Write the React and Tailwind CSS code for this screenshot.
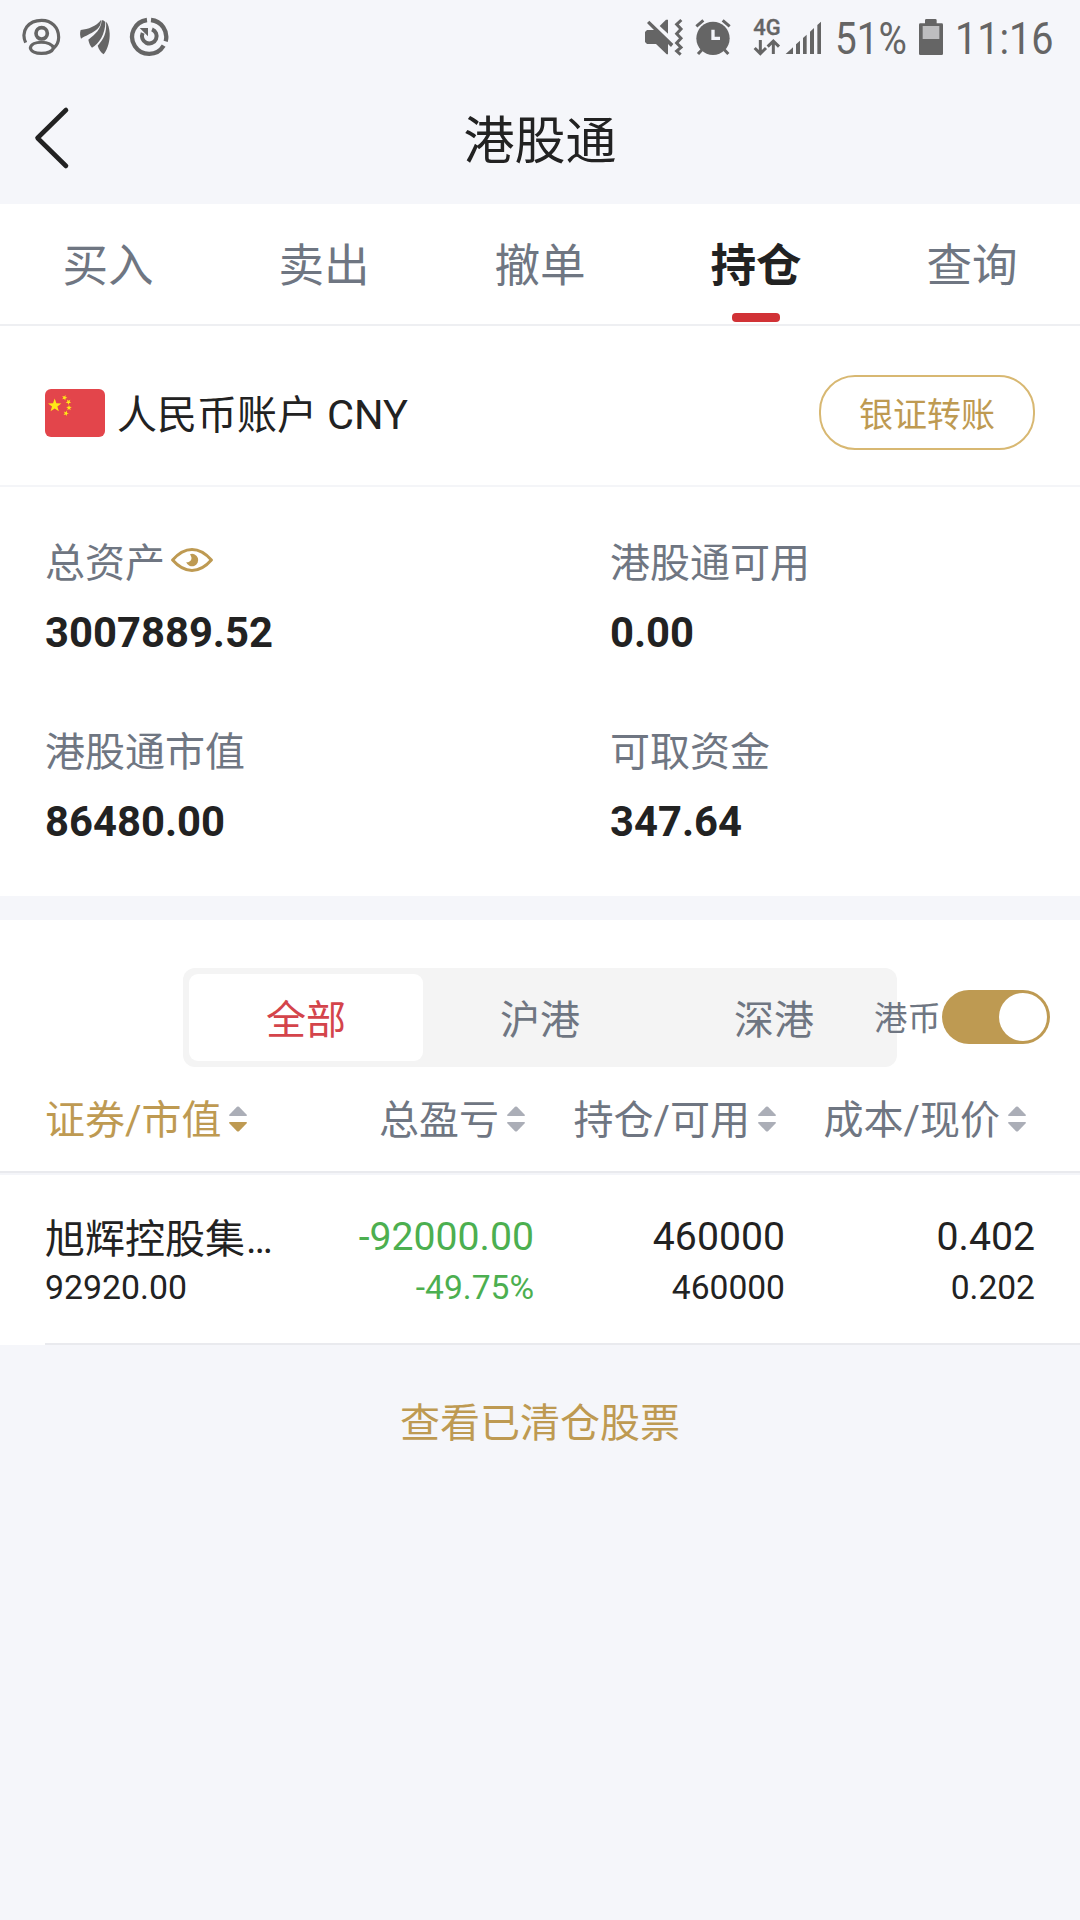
import React from "react";

const tabs = ["买入", "卖出", "撤单", "持仓", "查询"];

const assets = [
  { label: "总资产", value: "3007889.52", eye: true },
  { label: "港股通可用", value: "0.00" },
  { label: "港股通市值", value: "86480.00" },
  { label: "可取资金", value: "347.64" },
];

const columns = [
  { label: "证券/市值", active: true },
  { label: "总盈亏" },
  { label: "持仓/可用" },
  { label: "成本/现价" },
];

function StatusBar() {
  return (
    <div className="flex h-[74px] items-start text-[#656565]">
      <svg className="ml-5 h-[74px] w-11 shrink-0" viewBox="59 0 132 222" fill="none" stroke="currentColor" strokeWidth="9.5">
        <path d="M76 128 C60 92 84 61 124 61 C154 61 175 83 175 112 C175 126 169 137 160 144" />
        <circle cx="124" cy="100" r="17" strokeWidth="11" />
        <path d="M90 144 C94 121 150 121 160 144 C150 166 94 165 90 144 Z" />
      </svg>
      <svg className="ml-[14px] h-[74px] w-[34px] shrink-0" viewBox="234 0 102 222" fill="currentColor">
        <path d="M242 90 C265 87 288 80 303 60 C304 92 272 98 243 116 C240 107 239 99 242 90 Z" />
        <path d="M305 61 C303 88 287 102 265 119 C267 130 271 138 276 143 C297 132 316 102 316 66 C312 62 309 60 305 61 Z" />
        <path d="M318 65 C321 98 311 117 293 137 C296 149 304 158 311 163 C325 145 330 120 329 100 C328 85 325 72 318 65 Z" />
      </svg>
      <svg className="ml-4 h-[74px] w-[42px] shrink-0" viewBox="384 0 126 222" fill="none" stroke="currentColor" strokeWidth="13">
        <path d="M441 60 A51 51 0 1 0 491 137" />
        <path d="M453 60 A51 51 0 0 1 497 124" />
        <path d="M456 88 A22 22 0 1 1 428 99" strokeWidth="12" />
        <path d="M419 84 H444 V109 Z" fill="currentColor" stroke="none" />
      </svg>

      <svg className="ml-auto h-[80px] w-10 shrink-0" viewBox="72 0 120 240" fill="currentColor">
        <path d="M81 69 L88 62 L160 132 L153 141 L144 132 V163 H140 L108 132 H81 L75 126 V96 L81 90 H102 Z" />
        <path d="M119 78 L138 59 H144 V101 Z" />
        <path d="M184 60 L170 73 L183 87 L170 101 L183 115 L170 129 L183 142 L170 153 L182 164" fill="none" stroke="currentColor" strokeWidth="9" />
      </svg>
      <svg className="ml-2.5 h-[80px] w-[38px] shrink-0" viewBox="222 0 114 240" fill="none" stroke="currentColor" strokeWidth="9">
        <circle cx="279" cy="115" r="50" fill="currentColor" stroke="none" />
        <path d="M229 79 L250 61 M308 61 L329 79 M234 162 L246 149 M325 162 L313 149" />
        <path d="M279 89 V115 H300" stroke="#f5f6fa" strokeWidth="10" />
      </svg>
      <svg className="ml-5 h-[80px] w-[72px] shrink-0" viewBox="396 0 216 240">
        <text x="400" y="105" fontSize="65" fontWeight="500" fontFamily="Roboto, sans-serif" textLength="82" lengthAdjust="spacingAndGlyphs" fill="currentColor" stroke="currentColor" strokeWidth="1">4G</text>
        <path d="M421 120 V160 M404 144 L421 161 L438 144 M460 162 V124 M443 140 L460 123 L477 140" fill="none" stroke="currentColor" strokeWidth="9" />
        <path d="M497 162 L519 142 V162 Z M528 162 V133 L540 122 V162 Z M549 162 V114 L560 104 V162 Z M570 162 V95 L582 84 V162 Z M592 162 V75 L603 65 V162 Z" fill="currentColor" />
      </svg>
      <span className="ml-[11px] w-[84px] shrink-0 whitespace-nowrap">
        <span className="inline-block origin-left scale-x-[0.86] text-[45px] leading-[77px]">51%</span>
      </span>
      <svg className="h-[80px] w-6 shrink-0" viewBox="897 0 72 240" fill="currentColor">
        <path d="M897 74 Q897 70 901 70 H915 V61 Q915 57 919 57 H946 Q950 57 950 61 V70 H965 Q969 70 969 74 V161 Q969 165 965 165 H901 Q897 165 897 161 Z" />
        <path d="M908 78 H958 V117 H908 Z" fill="#bdbdbf" />
      </svg>
      <span className="ml-3 w-[125px] shrink-0 whitespace-nowrap">
        <span className="inline-block origin-left scale-x-[0.88] text-[45px] leading-[77px]">11:16</span>
      </span>
    </div>
  );
}

function Flag() {
  const star = "0,-10 2.35,-3.2 9.5,-3.1 3.8,1.2 5.9,8.1 0,4 -5.9,8.1 -3.8,1.2 -9.5,-3.1 -2.35,-3.2";
  return (
    <svg className="h-12 w-[60px] shrink-0" viewBox="0 0 60 48">
      <rect width="60" height="48" rx="6" fill="#e3454b" />
      <g fill="#ffe916">
        <polygon points={star} transform="translate(9.7 16.6) scale(0.7)" />
        <polygon points={star} transform="translate(19.5 8.7) rotate(20) scale(0.29)" />
        <polygon points={star} transform="translate(23.5 13) rotate(40) scale(0.29)" />
        <polygon points={star} transform="translate(24 18.8) scale(0.29)" />
        <polygon points={star} transform="translate(21 24.3) rotate(20) scale(0.29)" />
      </g>
    </svg>
  );
}

function Eye() {
  return (
    <svg className="mb-[8px] ml-[6px] h-6 w-[42px]" viewBox="0 0 42 24" fill="none">
      <path d="M1.6 12 C6 7 13 1.5 21 1.5 C29 1.5 36 7 40.4 12 C36 17 29 22.5 21 22.5 C13 22.5 6 17 1.6 12 Z" stroke="#be9a52" strokeWidth="3" strokeLinejoin="round" />
      <path d="M19 6.2 A6.2 6.2 0 1 1 15.2 14.2 C18.5 14.8 21 12.3 20.4 9.3 C20.2 8.3 19.8 7.6 19 6.2 Z" fill="#be9a52" />
    </svg>
  );
}

function SortArrows({ active }) {
  return (
    <svg className="mb-[4px] h-[26px] w-[18px] shrink-0" viewBox="0 0 18 26">
      <path d="M8 0.8 Q9 0 10 0.8 L18 9 Q18 10 17 10 H1 Q0 10 0 9 Z" fill="#abaeb7" />
      <path d="M8 25.2 Q9 26 10 25.2 L18 17 Q18 16 17 16 H1 Q0 16 0 17 Z" fill={active ? "#be9a52" : "#abaeb7"} />
    </svg>
  );
}

export default function App() {
  return (
    <div className="h-[1920px] w-[1080px] overflow-hidden bg-[#f5f6fa] font-['Roboto','Noto_Sans_CJK_SC',sans-serif] text-[#222222]">
      <StatusBar />

      <header className="grid h-[130px] grid-cols-[1fr_auto_1fr] items-center">
        <svg className="mb-[2px] ml-[34px] h-16 w-9" viewBox="34 106 36 64" fill="none" stroke="#222" strokeWidth="4.6" strokeLinecap="round" strokeLinejoin="round">
          <path d="M66 110 L37.5 138 L66 166" />
        </svg>
        <h1 className="pt-[6px] text-[51px] leading-[60px]">港股通</h1>
      </header>

      <nav className="grid h-[122px] grid-cols-5 border-b-2 border-[#eeeff2] bg-white text-[45.6px] text-[#6f7682]">
        {tabs.map((t) => (
          <div key={t} className="flex flex-col items-center">
            <span className={t === "持仓" ? "mt-[31px] h-[78px] font-bold leading-[64px] text-[#222]" : "mt-[31px] h-[78px] leading-[64px]"}>{t}</span>
            {t === "持仓" && <span className="h-[9px] w-12 rounded-[4px] bg-[#d13236]" />}
          </div>
        ))}
      </nav>

      <section className="flex h-[161px] items-center border-b-2 border-[#f4f5f8] bg-white px-[45px] pt-[14px]">
        <Flag />
        <span className="ml-3 flex-1 pt-[5px] text-[40px] leading-[50px]">人民币账户 <span className="text-[41.5px]">CNY</span></span>
        <button className="h-[75px] w-[216px] rounded-[36px] border-2 border-[#d8b872] pt-[4px] text-[34px] leading-[50px] text-[#be9a52]">
          银证转账
        </button>
      </section>

      <section className="grid h-[409px] grid-cols-[565px_1fr] content-start gap-y-[69px] bg-white pl-[45px] pt-[47px]">
        {assets.map((a) => (
          <div key={a.label} className="h-[120px]">
            <div className="flex h-[60px] items-center text-[40px] leading-[60px] text-[#6f7682]">
              {a.label}
              {a.eye && <Eye />}
            </div>
            <div className="pt-[9px] text-[41.8px] font-bold leading-[60px]">{a.value}</div>
          </div>
        ))}
      </section>

      <section className="mt-6 bg-white">
        <div className="flex h-[147px] pl-[183px] pt-12">
          <div className="grid h-[99px] w-[714px] shrink-0 grid-cols-3 rounded-[12px] bg-[#f4f4f4] p-[6px] text-center text-[40px] leading-[81px] text-[#6f7682]">
            <span className="rounded-[9px] bg-white pt-[6px] text-[#d4444b]">全部</span>
            <span className="pt-[6px]">沪港</span>
            <span className="pt-[6px]">深港</span>
          </div>
          <div className="relative -ml-[22px] flex h-[98px] shrink-0 items-center text-[33.4px] text-[#6f7682]">
            <span className="-ml-px w-[68px] whitespace-nowrap pt-[4px]">港币</span>
            <span className="flex h-[54px] w-[108px] items-center justify-end rounded-full bg-[#be9a52] p-[3px]">
              <span className="size-12 rounded-full bg-white" />
            </span>
          </div>
        </div>

        <div className="grid h-[106px] grid-cols-[239px_250px_251px_250px] border-b-2 border-[#e9eaee] px-[45px] pt-[22px] text-[40px] leading-[64px] text-[#6f7682]">
          {columns.map((c) => (
            <div
              key={c.label}
              className={c.active
                ? "flex h-[64px] items-center gap-[7px] whitespace-nowrap text-[#be9a52]"
                : "flex h-[64px] items-center justify-end gap-[8px] whitespace-nowrap pr-[9px]"}
            >
              {c.label}
              <SortArrows active={c.active} />
            </div>
          ))}
        </div>
        <div className="h-[2px] bg-[#f4f5f9]" />

        <div className="grid h-[168px] grid-cols-[239px_250px_251px_250px] px-[45px] pt-[35px] text-right text-[39.2px] leading-[54px]">
          <div className="text-left">
            <div className="pt-[3px] text-[40px] leading-[54px]">旭辉控股集<span className="ml-px">…</span></div>
            <div className="text-[33.8px] leading-[42px]">92920.00</div>
          </div>
          <div className="text-[#4caf50]">
            <div>-92000.00</div>
            <div className="pt-[2px] text-[33.6px] leading-[44px]">-49.75%</div>
          </div>
          <div>
            <div>460000</div>
            <div className="pt-[2px] text-[33.6px] leading-[44px]">460000</div>
          </div>
          <div>
            <div>0.402</div>
            <div className="pt-[2px] text-[33.6px] leading-[44px]">0.202</div>
          </div>
        </div>
        <div className="ml-[45px] h-[2px] bg-[#e9eaee]" />
      </section>

      <div className="pt-[49px] text-center text-[40px] leading-[60px] text-[#be9a52]">查看已清仓股票</div>
    </div>
  );
}
